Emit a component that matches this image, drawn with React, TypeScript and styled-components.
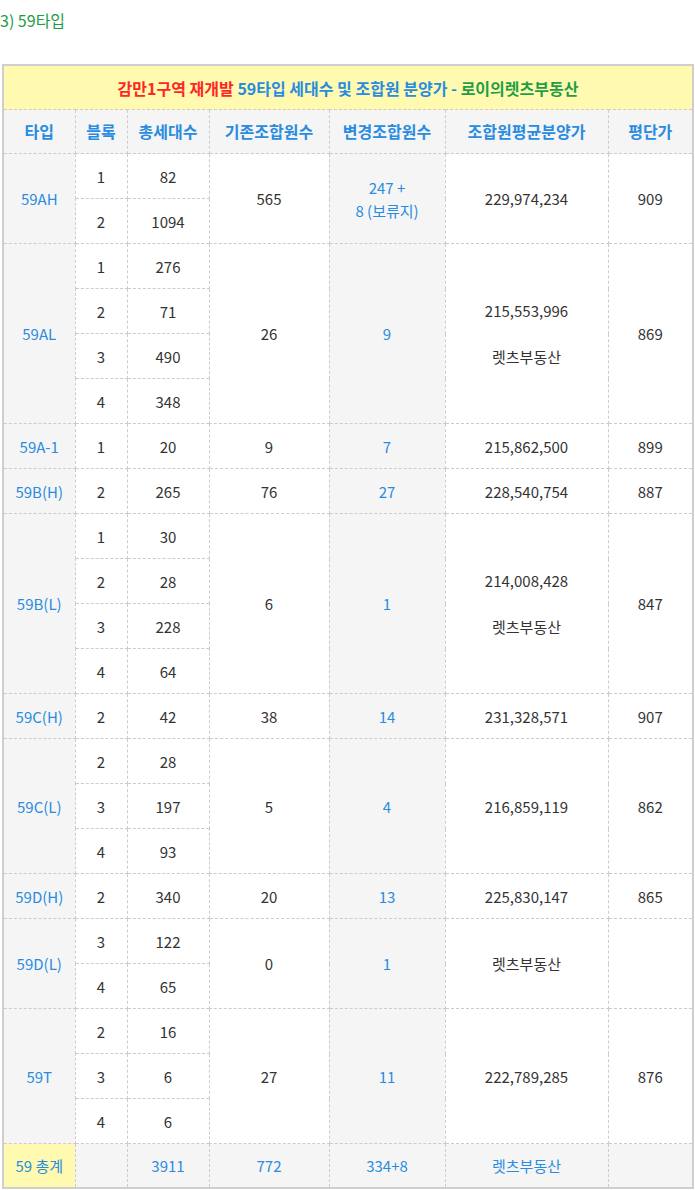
import styled, { createGlobalStyle } from "styled-components";

const GlobalStyle = createGlobalStyle`
  body {
    margin: 0;
    background: #fff;
    font-family: "Noto Sans CJK KR", "Noto Sans", sans-serif;
  }
`;

const BLUE = "#2a8ce0";
const TEXT = "#333333";

const Page = styled.div`
  width: 695px;
  padding-top: 10px;
`;

const Heading = styled.p`
  margin: 0 0 33px 0;
  height: 21px;
  line-height: 21px;
  font-size: 16px;
  color: #1d9b48;
`;

const Table = styled.table`
  margin-left: 2px;
  width: 690px;
  border-collapse: collapse;
  table-layout: fixed;
  border: 2px solid #cfcfcf;
  font-size: 15px;
`;

type Tone = "text" | "blue" | "head";
type Fill = "white" | "gray" | "yellow";

const fills: Record<Fill, string> = {
  white: "#ffffff",
  gray: "#f5f5f5",
  yellow: "#fffab0",
};

const Cell = styled.td<{ $tone?: Tone; $fill?: Fill }>`
  height: ${(p) => (p.$tone === "head" ? 43 : 44)}px;
  padding: 0;
  text-align: center;
  vertical-align: middle;
  border: 1px dashed #cccccc;
  line-height: 23px;
  background: ${(p) => fills[p.$fill || "white"]};
  color: ${(p) => (p.$tone === "blue" || p.$tone === "head" ? BLUE : TEXT)};
  font-weight: ${(p) => (p.$tone === "head" ? 700 : 400)};
  font-size: ${(p) => (p.$tone === "head" ? 16 : 15)}px;
  white-space: nowrap;
`;

const TitleCell = styled.td`
  height: 43px;
  padding: 0;
  text-align: center;
  background: #fffab0;
  border: 1px dashed #cccccc;
  font-weight: 700;
  font-size: 16px;
`;

const Red = styled.span`
  color: #ff2626;
`;
const Blue = styled.span`
  color: ${BLUE};
`;
const Green = styled.span`
  color: #1f9e45;
`;

const TotalRow = styled.tr`
  td {
    height: 43px;
  }
`;

interface Block {
  no: string;
  count: string;
}

interface TypeRow {
  type: string;
  blocks: Block[];
  existing: string;
  changed: string[];
  price: string[];
  perPyeong: string;
}

const rows: TypeRow[] = [
  {
    type: "59AH",
    blocks: [
      { no: "1", count: "82" },
      { no: "2", count: "1094" },
    ],
    existing: "565",
    changed: ["247 +", "8 (보류지)"],
    price: ["229,974,234"],
    perPyeong: "909",
  },
  {
    type: "59AL",
    blocks: [
      { no: "1", count: "276" },
      { no: "2", count: "71" },
      { no: "3", count: "490" },
      { no: "4", count: "348" },
    ],
    existing: "26",
    changed: ["9"],
    price: ["215,553,996", "", "렛츠부동산"],
    perPyeong: "869",
  },
  {
    type: "59A-1",
    blocks: [{ no: "1", count: "20" }],
    existing: "9",
    changed: ["7"],
    price: ["215,862,500"],
    perPyeong: "899",
  },
  {
    type: "59B(H)",
    blocks: [{ no: "2", count: "265" }],
    existing: "76",
    changed: ["27"],
    price: ["228,540,754"],
    perPyeong: "887",
  },
  {
    type: "59B(L)",
    blocks: [
      { no: "1", count: "30" },
      { no: "2", count: "28" },
      { no: "3", count: "228" },
      { no: "4", count: "64" },
    ],
    existing: "6",
    changed: ["1"],
    price: ["214,008,428", "", "렛츠부동산"],
    perPyeong: "847",
  },
  {
    type: "59C(H)",
    blocks: [{ no: "2", count: "42" }],
    existing: "38",
    changed: ["14"],
    price: ["231,328,571"],
    perPyeong: "907",
  },
  {
    type: "59C(L)",
    blocks: [
      { no: "2", count: "28" },
      { no: "3", count: "197" },
      { no: "4", count: "93" },
    ],
    existing: "5",
    changed: ["4"],
    price: ["216,859,119"],
    perPyeong: "862",
  },
  {
    type: "59D(H)",
    blocks: [{ no: "2", count: "340" }],
    existing: "20",
    changed: ["13"],
    price: ["225,830,147"],
    perPyeong: "865",
  },
  {
    type: "59D(L)",
    blocks: [
      { no: "3", count: "122" },
      { no: "4", count: "65" },
    ],
    existing: "0",
    changed: ["1"],
    price: ["렛츠부동산"],
    perPyeong: "",
  },
  {
    type: "59T",
    blocks: [
      { no: "2", count: "16" },
      { no: "3", count: "6" },
      { no: "4", count: "6" },
    ],
    existing: "27",
    changed: ["11"],
    price: ["222,789,285"],
    perPyeong: "876",
  },
];

const headers = ["타입", "블록", "총세대수", "기존조합원수", "변경조합원수", "조합원평균분양가", "평단가"];
const widths = [72, 52, 82, 120, 116, 163, 85];

function Lines({ lines }: { lines: string[] }) {
  return (
    <>
      {lines.map((l, i) => (
        <div key={i}>{l === "" ? "\u00a0" : l}</div>
      ))}
    </>
  );
}

function TypeGroup({ row }: { row: TypeRow }) {
  const span = row.blocks.length;
  return (
    <>
      {row.blocks.map((b, i) => (
        <tr key={i}>
          {i === 0 && (
            <Cell rowSpan={span} $tone="blue" $fill="gray">
              {row.type}
            </Cell>
          )}
          <Cell>{b.no}</Cell>
          <Cell>{b.count}</Cell>
          {i === 0 && (
            <>
              <Cell rowSpan={span}>{row.existing}</Cell>
              <Cell rowSpan={span} $tone="blue" $fill="gray">
                <Lines lines={row.changed} />
              </Cell>
              <Cell rowSpan={span}>
                <Lines lines={row.price} />
              </Cell>
              <Cell rowSpan={span}>{row.perPyeong}</Cell>
            </>
          )}
        </tr>
      ))}
    </>
  );
}

export default function App() {
  return (
    <Page>
      <GlobalStyle />
      <Heading>3) 59타입</Heading>
      <Table>
        <colgroup>
          {widths.map((w, i) => (
            <col key={i} style={{ width: w }} />
          ))}
        </colgroup>
        <tbody>
          <tr>
            <TitleCell colSpan={7}>
              <Red>감만1구역 재개발</Red> <Blue>59타입 세대수 및 조합원 분양가 -</Blue>{" "}
              <Green>로이의렛츠부동산</Green>
            </TitleCell>
          </tr>
          <tr>
            {headers.map((h) => (
              <Cell key={h} $tone="head" $fill="gray">
                {h}
              </Cell>
            ))}
          </tr>
          {rows.map((r) => (
            <TypeGroup key={r.type} row={r} />
          ))}
          <TotalRow>
            <Cell $tone="blue" $fill="yellow">59 총계</Cell>
            <Cell $fill="gray"></Cell>
            <Cell $tone="blue" $fill="gray">3911</Cell>
            <Cell $tone="blue" $fill="gray">772</Cell>
            <Cell $tone="blue" $fill="gray">334+8</Cell>
            <Cell $tone="blue" $fill="gray">렛츠부동산</Cell>
            <Cell $fill="gray"></Cell>
          </TotalRow>
        </tbody>
      </Table>
    </Page>
  );
}
